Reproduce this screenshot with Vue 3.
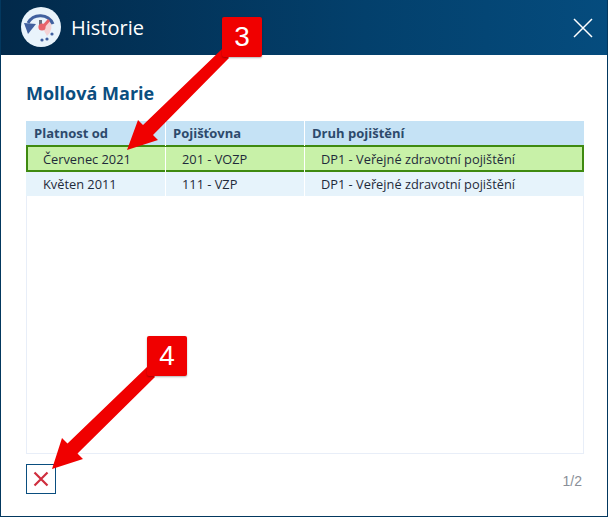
<template>
  <div class="okno">
    <header class="hlavicka">
      <svg class="logo" viewBox="0 0 40 40" width="40" height="40">
        <circle cx="20" cy="20" r="20" fill="#e9f3fb" />
        <path d="M21 20 L29 13 A13 13 0 0 1 26 29 Z" fill="#f4d2d4" />
        <path d="M7 16 A14 14 0 0 1 32 17" fill="none" stroke="#41609f" stroke-width="3" />
        <path d="M3 16 L15 17 L7 27 Z" fill="#41609f" />
        <rect x="18" y="13" width="3" height="9" fill="#6b6f80" />
        <circle cx="21" cy="20" r="3.6" fill="#e8636b" />
        <path d="M21 21 L28 13" stroke="#e8636b" stroke-width="3" />
        <circle cx="21" cy="33" r="1.6" fill="#41609f" />
        <circle cx="26" cy="32" r="1.6" fill="#41609f" />
        <circle cx="31" cy="27" r="1.6" fill="#41609f" />
      </svg>
      <span class="nadpis">Historie</span>
      <svg class="zavrit" viewBox="0 0 20 20" width="20" height="20">
        <path d="M1 1 L19 19 M19 1 L1 19" stroke="#fff" stroke-width="1.5" fill="none" />
      </svg>
    </header>

    <main class="obsah">
      <h2 class="jmeno">Mollová Marie</h2>

      <div class="tabulka">
        <div class="radek zahlavi">
          <div>Platnost od</div>
          <div>Pojišťovna</div>
          <div>Druh pojištění</div>
        </div>
        <div
          v-for="(radek, index) in radky"
          :key="index"
          class="radek polozka"
          :class="{ vybrany: index === 0 }"
        >
          <div>{{ radek.platnost }}</div>
          <div>{{ radek.pojistovna }}</div>
          <div>{{ radek.druh }}</div>
        </div>
      </div>

      <footer class="paticka">
        <button class="storno" type="button">
          <svg viewBox="0 0 16 16" width="16" height="16">
            <path d="M1.5 1.5 L14.5 14.5 M14.5 1.5 L1.5 14.5" stroke="#cf2e3e" stroke-width="2.2" fill="none" />
          </svg>
        </button>
        <span class="strana">1/2</span>
      </footer>
    </main>

    <!-- sipky s cisly lezi pres okno -->
    <svg class="sipky" viewBox="0 0 608 517" width="608" height="517">
      <polygon points="222,49 229,58 153,135 158,140 127,150 138,120 143,125" fill="#f00000" />
      <polygon points="147,367 155,377 77.5,453.5 83,459 52,469 62,438 67.5,443.5" fill="#f00000" />
    </svg>
    <div class="stitek stitek-3">3</div>
    <div class="stitek stitek-4">4</div>
  </div>
</template>

<script setup>
const radky = [
  { platnost: 'Červenec 2021', pojistovna: '201 - VOZP', druh: 'DP1 - Veřejné zdravotní pojištění' },
  { platnost: 'Květen 2011', pojistovna: '111 - VZP', druh: 'DP1 - Veřejné zdravotní pojištění' }
];
</script>

<style>
html, body {
  margin: 0;
  background: #fff;
}
</style>

<style scoped>
.okno {
  position: relative;
  width: 608px;
  height: 517px;
  box-sizing: border-box;
  display: flex;
  flex-direction: column;
  overflow: hidden;
  font-family: "Open Sans", sans-serif;
  background: #fff;
  border: 1px solid #03385f;
  border-top: none;
}

.hlavicka {
  height: 55px;
  margin: 0 -1px;
  flex-shrink: 0;
  display: flex;
  align-items: center;
  padding: 0 15px 0 21px;
  background: linear-gradient(90deg, #02294a 0%, #03406c 60%, #054c7e 100%);
  color: #fff;
}

.logo {
  margin-top: -1px;
}

.nadpis {
  margin-left: 10px;
  font-size: 20px;
  flex: 1;
}

.obsah {
  flex: 1;
  display: flex;
  flex-direction: column;
  padding: 26px 23px 22px 25px;
  min-height: 0;
}

.jmeno {
  margin: 0 0 15px;
  font-size: 18px;
  line-height: 25px;
  font-weight: 700;
  color: #0a4e7f;
}

.tabulka {
  flex: 1;
  border: 1px solid #e8eef8;
  border-top: none;
  font-size: 12.8px;
  color: #1f2a3a;
}

.radek {
  display: grid;
  grid-template-columns: 140px 139px 1fr;
  margin: 0 -1px;
}

.radek > div {
  border-right: 1px solid #fff;
}

.radek > div:last-child {
  border-right: none;
}

.zahlavi {
  height: 24px;
  line-height: 25px;
  background: #c5e2f5;
  font-size: 13px;
  font-weight: 700;
  color: #2d4a6c;
}

.zahlavi > div {
  padding-left: 7px;
}

.zahlavi > div:first-child {
  padding-left: 8px;
}

.polozka {
  height: 24px;
  line-height: 24px;
  background: #e6f3fb;
}

.polozka > div {
  padding-left: 16px;
}

.polozka > div:first-child {
  padding-left: 17px;
}

.vybrany {
  height: 27px;
  box-sizing: border-box;
  line-height: 25px;
  background: #c8f1a8;
  border: 2px solid #3f8a10;
  grid-template-columns: 138px 139px 1fr;
}

.vybrany > div:first-child {
  padding-left: 15px;
}

.paticka {
  display: flex;
  align-items: flex-end;
  justify-content: space-between;
  margin-top: 10px;
}

.storno {
  width: 30px;
  height: 30px;
  padding: 0;
  display: flex;
  align-items: center;
  justify-content: center;
  background: #fff;
  border: 1px solid #0a4e7f;
}

.strana {
  font-family: "Liberation Sans", sans-serif;
  font-size: 14px;
  line-height: 16px;
  margin-bottom: 5px;
  padding-right: 2px;
  color: #8a8f98;
}

.sipky {
  position: absolute;
  left: -1px;
  top: 0;
  pointer-events: none;
}

.stitek {
  position: absolute;
  width: 40px;
  height: 40px;
  border-radius: 2px;
  background: #f00000;
  color: #fff;
  font-family: "Liberation Sans", sans-serif;
  font-size: 28px;
  line-height: 40px;
  text-align: center;
  box-shadow: 0 1px 2px rgba(0, 0, 0, 0.3);
}

.stitek-3 {
  left: 221px;
  top: 17px;
}

.stitek-4 {
  left: 146px;
  top: 336px;
}
</style>
